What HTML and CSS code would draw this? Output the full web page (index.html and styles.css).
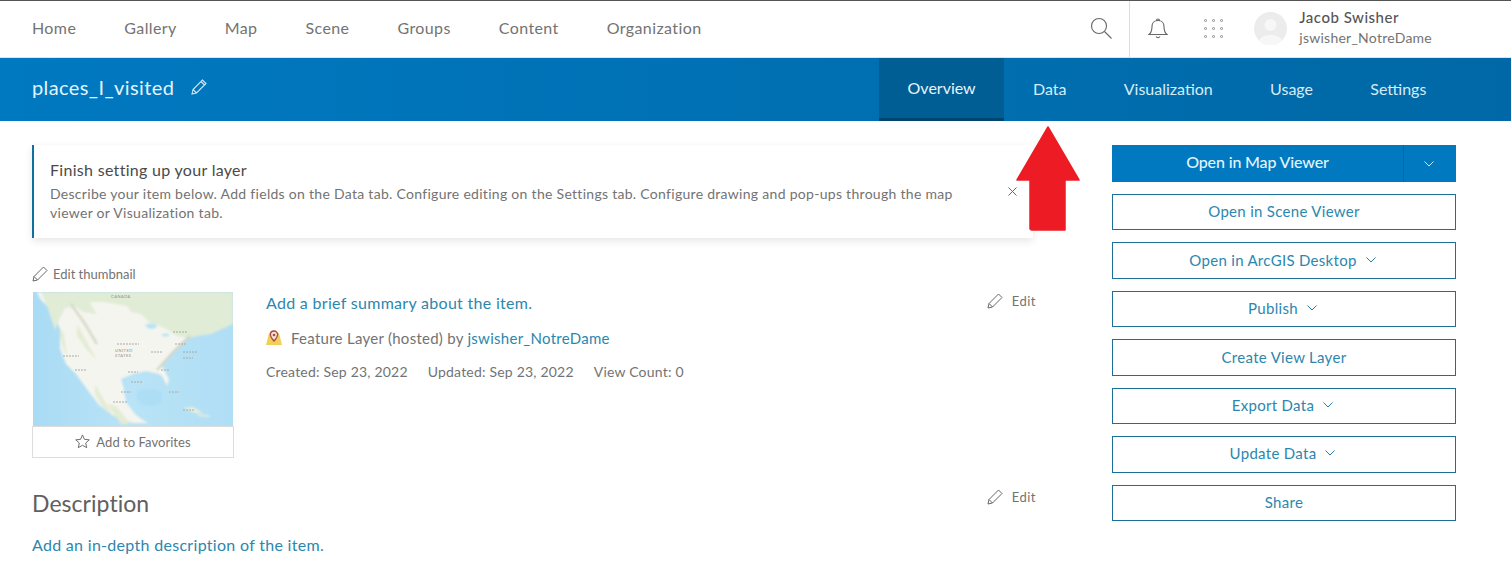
FILE: index.html
```html
<!DOCTYPE html>
<html lang="en">
<head>
    <meta charset="UTF-8">
    <meta name="viewport" content="width=device-width, initial-scale=1.0">
    <title>places_I_visited</title>
    <link rel="stylesheet" href="styles.css">
</head>
<body>
    <header class="top-nav">
        <nav class="top-links">
            <a>Home</a>
            <a>Gallery</a>
            <a>Map</a>
            <a>Scene</a>
            <a>Groups</a>
            <a>Content</a>
            <a>Organization</a>
        </nav>
        <div class="top-tools">
            <div class="search-cell">
                <svg width="24" height="24" viewBox="0 0 24 24" fill="none" stroke="#666" stroke-width="1.1"><circle cx="10" cy="10" r="7.5"/><path d="M15.5 15.5l7 7"/></svg>
            </div>
            <div class="bell-cell">
                <svg width="20" height="24" viewBox="0 0 20 24" fill="none" stroke="#666" stroke-width="1.1"><path d="M1 18.500h18c-2.500-2-3-4-3-8 0-3.500-2.500-6-6-6s-6 2.500-6 6c0 4-.5 6-3 8zM8.500 4.500c0-2 3-2 3 0M8 20.500c1 1.500 3 1.500 4 0"/></svg>
            </div>
            <div class="apps-grid">
                <i></i><i></i><i></i><i></i><i></i><i></i><i></i><i></i><i></i>
            </div>
            <div class="avatar">
                <svg width="33" height="33" viewBox="0 0 33 33"><circle cx="16.500" cy="16.500" r="16.500" fill="#ececec"/><circle cx="16.500" cy="13" r="6" fill="#f7f7f7"/><path d="M5 29c2-8 21-8 23 0a16.500 16.500 0 0 1-23 0z" fill="#f7f7f7"/></svg>
            </div>
            <div class="user-names">
                <span class="user-name">Jacob Swisher</span>
                <span class="user-id">jswisher_NotreDame</span>
            </div>
        </div>
    </header>

    <section class="title-bar">
        <div class="title-left">
            <h1>places_I_visited</h1>
            <svg class="pencil" width="16" height="16" viewBox="0 0 16 16" fill="none" stroke="#cfe8f6" stroke-width="1.1"><path d="M1 15l1-4.500L11.500 1l3.500 3.500L5.500 14zM2 10.500L5.500 14M10 2.500l3.500 3.500"/></svg>
        </div>
        <nav class="tabs">
            <a class="tab active">Overview</a>
            <a class="tab">Data</a>
            <a class="tab">Visualization</a>
            <a class="tab">Usage</a>
            <a class="tab">Settings</a>
        </nav>
    </section>

    <main class="content">
        <div class="left-col">
            <div class="notice">
                <div class="notice-text">
                    <h2>Finish setting up your layer</h2>
                    <p>Describe your item below. Add fields on the Data tab. Configure editing on the Settings tab. Configure drawing and pop-ups through the map viewer or Visualization tab.</p>
                </div>
                <svg class="notice-close" width="9" height="9" viewBox="0 0 9 9" stroke="#666" stroke-width="1"><path d="M.5.500l8 8M8.500.500l-8 8"/></svg>
            </div>

            <div class="item-row">
                <div class="thumb-col">
                    <div class="edit-thumb">
                        <svg width="16" height="16" viewBox="0 0 16 16" fill="none" stroke="#666" stroke-width="1"><path d="M1 15l1-4.500L11.500 1l3.500 3.500L5.500 14zM2 10.500L5.500 14"/></svg>
                        <span>Edit thumbnail</span>
                    </div>
                    <svg class="map" width="200" height="134" viewBox="0 0 200 134">
                        <defs>
                            <linearGradient id="sea" x1="0" y1="0" x2="1" y2="0">
                                <stop offset="0" stop-color="#a9dbf4"/>
                                <stop offset="0.5" stop-color="#b9e3f6"/>
                                <stop offset="1" stop-color="#b0def5"/>
                            </linearGradient>
                            <filter id="soft"><feGaussianBlur stdDeviation="1"/></filter>
                        </defs>
                        <rect width="200" height="134" fill="url(#sea)"/>
                        <g filter="url(#soft)">
                            <path d="M4 0l3 7 13 13 7 17v20l6 15 10 10 13 18 10 13 13 10 21 8H115l-8-5-5-4-9-12-3-17-2-6 12-5 13-3 13 3 3 2 5 10 2-7-7-13 14-17 14-13 13-10 26-13V0z" fill="#f5f5ef"/>
                            <path d="M8 0h192v32l-22 10-14 2-8 2-12-2-12-8-16-6-8-8-10-2-4-6-24-4-14 0-8-8H52l8 14 4 6-14-2-8-6-10 2-6 12-4 10-4-12-4-12z" fill="#e0ecd6"/>
                            <path d="M27 36l4 6 2 14 2 10-5-10-3-12zM44 32l10 18 10 18-10-10-10-14zM62 92l8 14 10 18-10-8-8-14zM74 112l9 2 8 10 6 8H88z" fill="#e3ecd4"/>
                            <path d="M112 33c6-3 12-1 12 2-3 3-10 3-12-2zM128 43c3-2 7-2 9 0-2 2-7 2-9 0z" fill="#b9e3f6"/>
                            <path d="M38 12l14 20 12 20" stroke="#d6d9c6" stroke-width="2.500" fill="none"/>
                            <path d="M124 78l16-18 17-16" stroke="#d4d6c6" stroke-width="2.500" fill="none"/>
                            <path d="M150 116l10-1 10 6-8 0zM163 122l12 1 3 2-12-1z" fill="#e9eedd"/>
                            <path d="M104 100c6-4 18-4 24 0 4 8-2 14-10 14-10 0-16-6-14-14z" fill="#a5daf3" opacity=".6"/>
                        </g>
                        <path d="M84 52h22M118 60h12M95 80h10M98 90h12M88 100h10M80 110h14M140 40h14M142 52h12M150 60h14M150 66h10M128 78h8M30 64h16M42 78h12M136 100h10M150 118h12" stroke="#a8aaa3" stroke-width="1" stroke-dasharray="2 1" fill="none"/>
                        <text class="map-label" x="78" y="6">CANADA</text>
                        <text class="map-label" x="82" y="60">UNITED</text>
                        <text class="map-label" x="82" y="65">STATES</text>
                    </svg>
                    <div class="favorites">
                        <svg width="15" height="15" viewBox="0 0 16 16" fill="none" stroke="#666" stroke-width="1"><path d="M8 1l2.100 4.700 5.100.500-3.800 3.400 1.100 5L8 12l-4.500 2.600 1.100-5L.8 6.200l5.100-.500z"/></svg>
                        <span>Add to Favorites</span>
                    </div>
                </div>
                <div class="item-info">
                    <a class="summary">Add a brief summary about the item.</a>
                    <div class="item-type">
                        <svg width="16" height="16" viewBox="0 0 16 16"><path d="M3 3h10l3 12H0z" fill="#f0cf5a"/><path d="M8 1c-2.300 0-3.600 1.700-3.600 3.600C4.400 7 6.600 9.500 8 11c1.400-1.500 3.600-4 3.600-6.400C11.600 2.700 10.300 1 8 1z" fill="#f3e3d3" stroke="#a84a3c" stroke-width="1.300"/><circle cx="8" cy="5" r="1.300" fill="#a84a3c"/></svg>
                        <span>Feature Layer (hosted) by <a class="link">jswisher_NotreDame</a></span>
                    </div>
                    <div class="item-dates">
                        <span>Created: Sep 23, 2022</span>
                        <span>Updated: Sep 23, 2022</span>
                        <span>View Count: 0</span>
                    </div>
                </div>
                <div class="edit-link">
                    <svg width="16" height="16" viewBox="0 0 16 16" fill="none" stroke="#666" stroke-width="1"><path d="M1 15l1-4.500L11.500 1l3.500 3.500L5.500 14zM2 10.500L5.500 14"/></svg>
                    <span>Edit</span>
                </div>
            </div>

            <div class="desc-head">
                <h3>Description</h3>
                <div class="edit-link">
                    <svg width="16" height="16" viewBox="0 0 16 16" fill="none" stroke="#666" stroke-width="1"><path d="M1 15l1-4.500L11.500 1l3.500 3.500L5.500 14zM2 10.500L5.500 14"/></svg>
                    <span>Edit</span>
                </div>
            </div>
            <a class="summary">Add an in-depth description of the item.</a>
        </div>

        <aside class="actions">
            <div class="split-btn">
                <span class="split-main">Open in Map Viewer</span>
                <span class="split-arrow"><svg class="chev" width="10" height="6" viewBox="0 0 10 6" fill="none" stroke="#cfe8f6"><path d="M.5.500L5 5 9.500.500"/></svg></span>
            </div>
            <a class="btn">Open in Scene Viewer</a>
            <a class="btn">Open in ArcGIS Desktop <svg class="chev" width="10" height="6" viewBox="0 0 10 6" fill="none" stroke="#2b7ea8"><path d="M.5.500L5 5 9.500.500"/></svg></a>
            <a class="btn">Publish <svg class="chev" width="10" height="6" viewBox="0 0 10 6" fill="none" stroke="#2b7ea8"><path d="M.5.500L5 5 9.500.500"/></svg></a>
            <a class="btn">Create View Layer</a>
            <a class="btn">Export Data <svg class="chev" width="10" height="6" viewBox="0 0 10 6" fill="none" stroke="#2b7ea8"><path d="M.5.500L5 5 9.500.500"/></svg></a>
            <a class="btn">Update Data <svg class="chev" width="10" height="6" viewBox="0 0 10 6" fill="none" stroke="#2b7ea8"><path d="M.5.500L5 5 9.500.500"/></svg></a>
            <a class="btn">Share</a>
        </aside>
    </main>

    <svg class="red-arrow" width="65" height="105" viewBox="0 0 65 105"><path d="M32 1L63 54H49V104H16q-2 0-2-2V54H1z" fill="#ed1c24" stroke="#ed1c24" stroke-width="1.500" stroke-linejoin="round"/></svg>
</body>
</html>
```

FILE: styles.css
```css
body {
    margin: 0;
    background-color: white;
    color: #737373;
    font-family: Lato, "Open Sans", sans-serif;
    font-size: 14px;
    overflow: hidden;
    height: 571px;
    position: relative;
}
.top-nav {
    display: flex;
    justify-content: space-between;
    height: 56px;
    padding-left: 32px;
    border-top: 1px solid #555;
    border-bottom: 1px solid #d9e6ee;
}
.top-links {
    display: flex;
    align-items: center;
    gap: 48px;
    padding-bottom: 4px;
    font-size: 16px;
    letter-spacing: 0.4px;
}
.top-tools {
    display: flex;
    align-items: center;
    height: 100%;
}
.search-cell {
    display: flex;
    align-items: center;
    height: 100%;
    padding-right: 16px;
    border-right: 1px solid #ddd;
}
.search-cell svg {
    margin-bottom: 2px;
}
.bell-cell {
    margin-left: 18px;
    margin-bottom: 2px;
    display: flex;
}
.apps-grid {
    display: grid;
    grid-template-columns: repeat(3, 3px);
    gap: 5px;
    margin-left: 36px;
    margin-bottom: 2px;
}
.apps-grid i {
    width: 3px;
    height: 3px;
    border-radius: 50%;
    border: 1px solid #888;
    box-sizing: border-box;
}
.avatar {
    display: flex;
    margin-left: 31px;
    margin-bottom: 2px;
}
.user-names {
    display: flex;
    flex-direction: column;
    margin-left: 12px;
    margin-right: 79px;
    margin-bottom: 4px;
    gap: 3px;
}
.user-name {
    color: #555;
    font-size: 15px;
    font-weight: 500;
    letter-spacing: 0.5px;
}
.user-id {
    font-size: 14px;
    letter-spacing: 0.25px;
}
.title-bar {
    display: flex;
    justify-content: space-between;
    height: 63px;
    padding-left: 32px;
    background: linear-gradient(to right, #0079c1, #0068a6);
}
.title-left {
    display: flex;
    align-items: center;
    gap: 17px;
    padding-bottom: 5px;
}
h1 {
    margin: 0;
    color: #e3f4fc;
    font-size: 20px;
    font-weight: 400;
    letter-spacing: 0.4px;
}
.tabs {
    display: flex;
    margin-right: 56px;
}
.tab {
    display: flex;
    align-items: center;
    padding: 0 28.650px 2px;
    color: #d5ecf8;
    font-size: 16px;
}
.tab.active {
    background-color: #005e95;
    border-bottom: 3px solid #00466f;
    box-sizing: border-box;
    color: #e8f5fc;
}
.content {
    display: flex;
    justify-content: space-between;
    padding: 24px 55px 0 32px;
}
.left-col {
    width: 1004px;
}
.notice {
    display: flex;
    align-items: center;
    justify-content: space-between;
    box-sizing: border-box;
    height: 93px;
    margin-right: 3px;
    padding: 0 16px 0 16px;
    border-left: 2px solid #0f6f9e;
    box-shadow: 0 3px 8px rgba(0, 0, 0, 0.1);
}
.notice-text {
    width: 920px;
    padding-bottom: 2px;
}
h2 {
    margin: 0 0 5px;
    color: #4a4a4a;
    font-size: 16px;
    font-weight: 400;
    letter-spacing: 0.3px;
    line-height: 19px;
}
.notice p {
    margin: 0;
    font-size: 14px;
    line-height: 19px;
    letter-spacing: 0.29px;
}
.item-row {
    display: flex;
    margin-top: 26px;
}
.thumb-col {
    width: 202px;
    flex-shrink: 0;
}
.edit-thumb {
    display: flex;
    align-items: center;
    gap: 5px;
    height: 19px;
    margin-bottom: 9px;
    font-size: 13px;
}
.map {
    display: block;
    margin-left: 1px;
}
.map-label {
    fill: #8a8d87;
    font-size: 4px;
    letter-spacing: 0.5px;
}
.favorites {
    display: flex;
    align-items: center;
    justify-content: center;
    gap: 6px;
    box-sizing: border-box;
    height: 32px;
    padding-bottom: 1px;
    border: 1px solid #ddd;
    font-size: 13px;
    letter-spacing: 0.05px;
}
.item-info {
    flex: 1;
    padding: 29px 0 0 32px;
}
.summary {
    color: #2b87ae;
    font-size: 16px;
    letter-spacing: 0.3px;
}
.link {
    color: #2b87ae;
}
.item-type {
    display: flex;
    align-items: center;
    gap: 9px;
    margin-top: 17px;
    font-size: 15px;
    letter-spacing: 0.27px;
}
.item-dates {
    display: flex;
    gap: 20px;
    margin-top: 16px;
    letter-spacing: 0.2px;
}
.edit-link {
    display: flex;
    align-items: center;
    gap: 9px;
    height: 16px;
    margin-top: 29px;
    font-size: 13px;
    letter-spacing: 0.5px;
}
.desc-head {
    display: flex;
    justify-content: space-between;
    margin-top: 31px;
    margin-bottom: 18px;
}
h3 {
    margin: 0;
    color: #606060;
    font-size: 23px;
    font-weight: 400;
    letter-spacing: 0.05px;
    line-height: 28px;
}
.desc-head .edit-link {
    margin-top: 0;
}
.actions {
    display: flex;
    flex-direction: column;
    gap: 12px;
    width: 344px;
}
.split-btn {
    display: flex;
    height: 37px;
    background-color: #0079c1;
    color: #e3f4fc;
    font-size: 16px;
    font-weight: 500;
    letter-spacing: -0.15px;
}
.split-main {
    display: flex;
    flex: 1;
    align-items: center;
    justify-content: center;
    padding-bottom: 4px;
    border-right: 1px solid #006aa8;
}
.split-arrow {
    display: flex;
    align-items: center;
    justify-content: center;
    width: 52px;
    padding-right: 3px;
    box-sizing: border-box;
}
.btn {
    display: flex;
    align-items: center;
    justify-content: center;
    gap: 9px;
    box-sizing: border-box;
    height: 36.450px;
    padding-bottom: 2px;
    border: 1px solid #1d6f98;
    color: #2b87ae;
    font-size: 15px;
    letter-spacing: 0.3px;
}
.btn .chev {
    margin-right: 3px;
}
.red-arrow {
    position: absolute;
    left: 1016px;
    top: 126px;
}
```
